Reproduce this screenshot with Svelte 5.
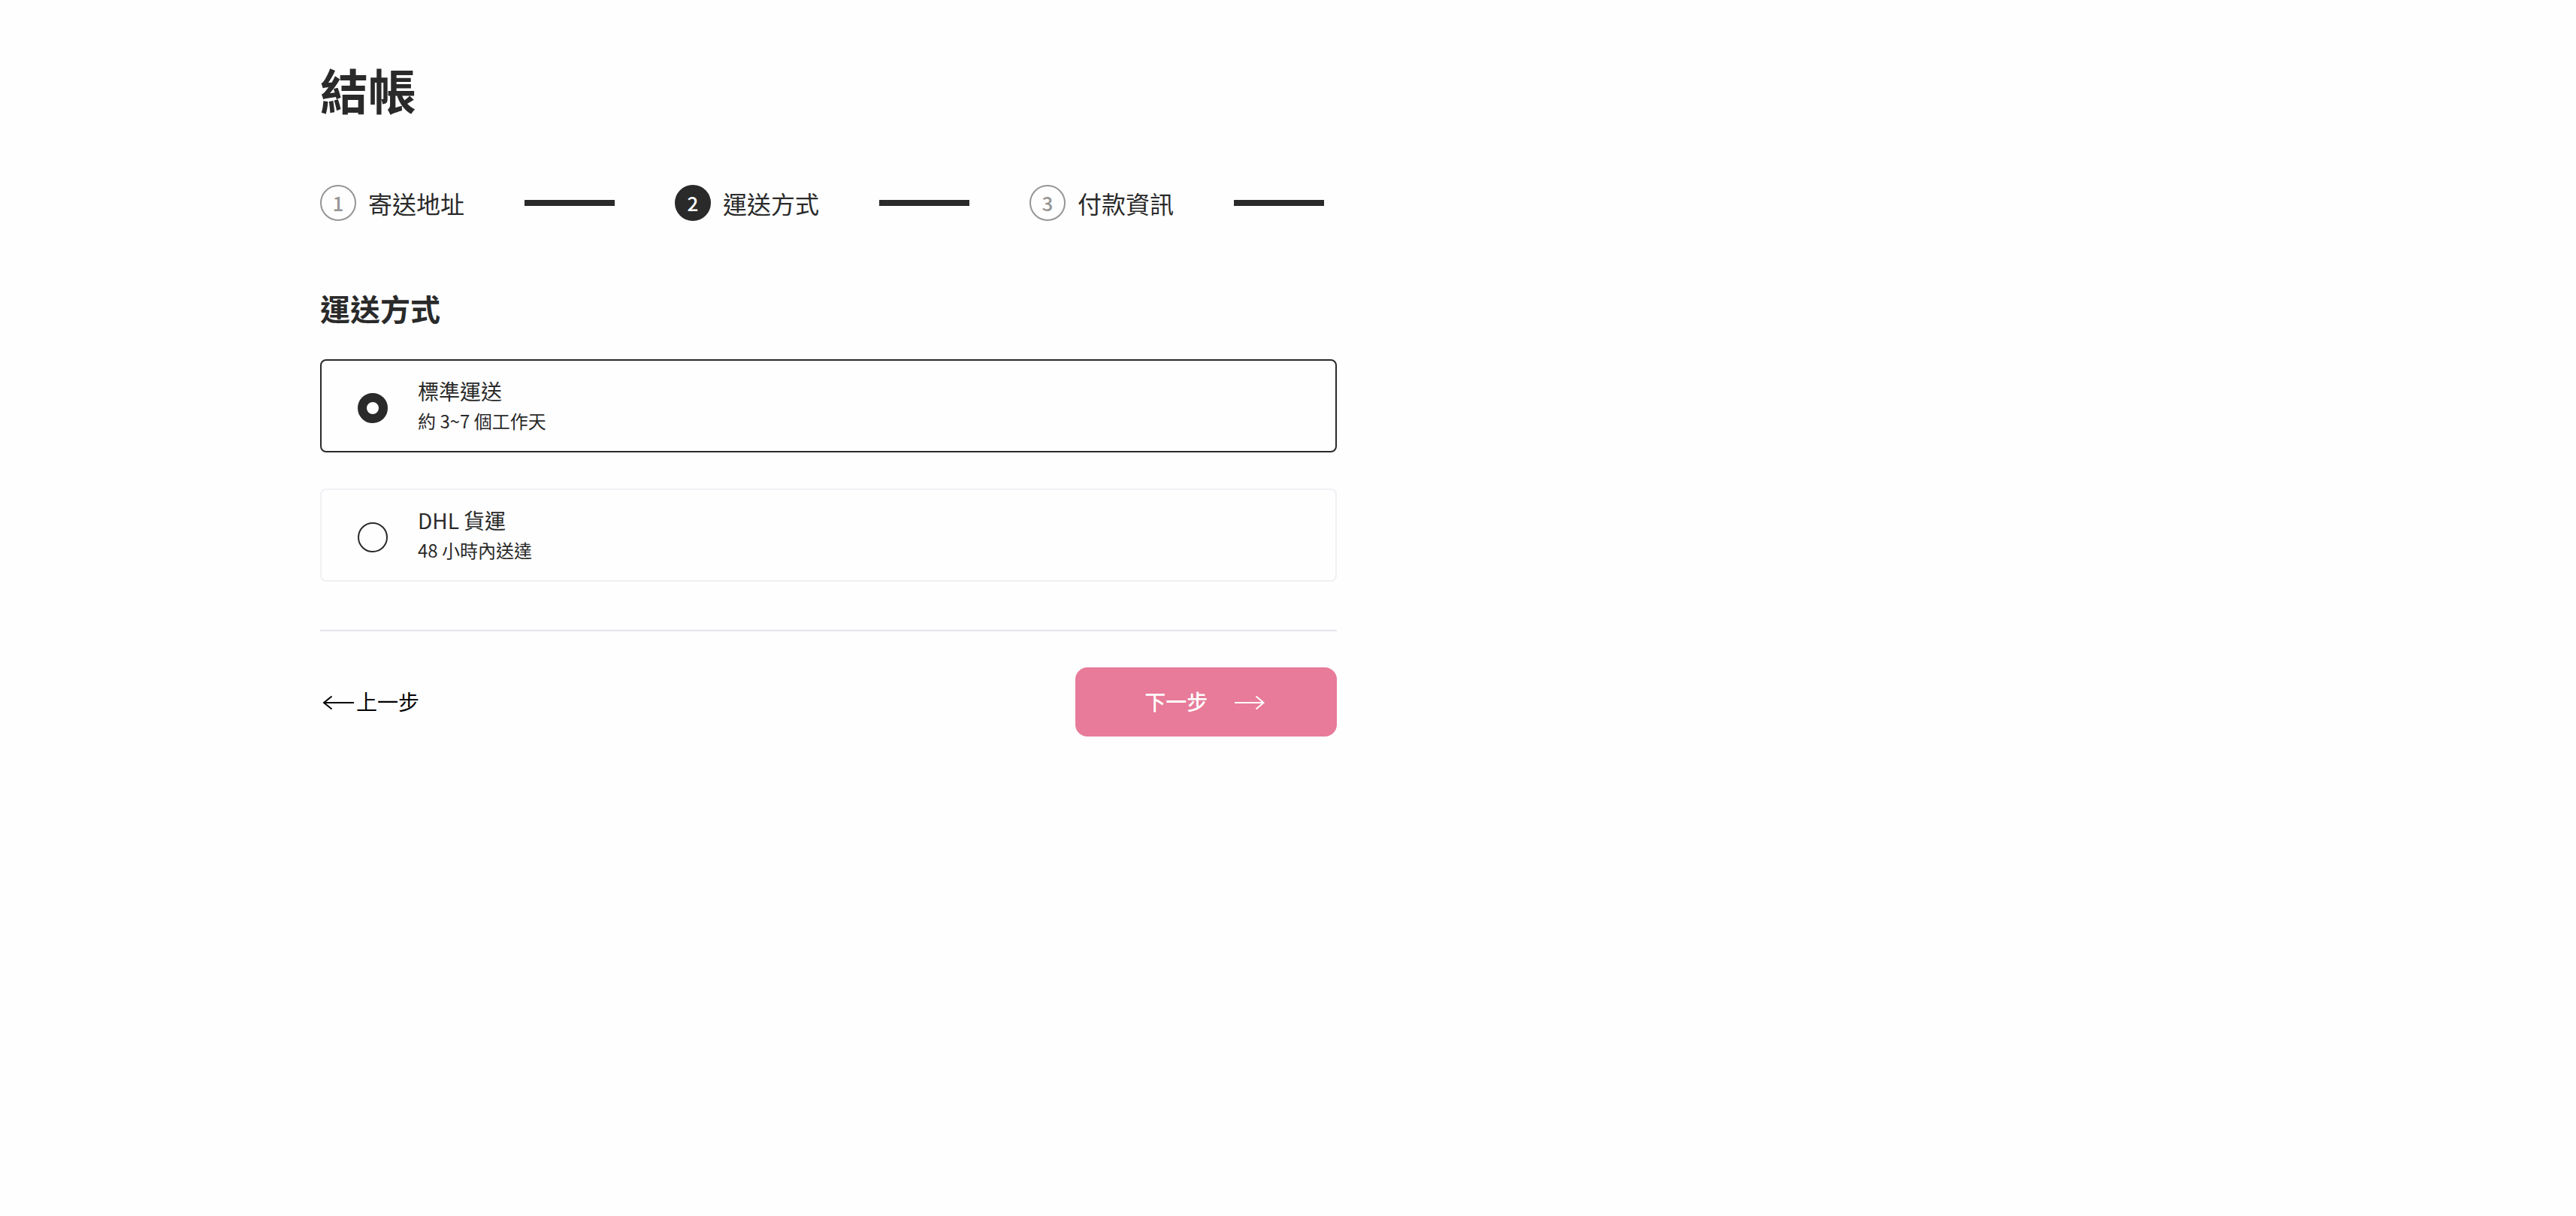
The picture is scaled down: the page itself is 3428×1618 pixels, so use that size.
<script>
  const steps = ['寄送地址', '運送方式', '付款資訊'];
  const current = 1;

  const methods = [
    { id: 'standard', name: '標準運送', note: '約 3~7 個工作天' },
    { id: 'dhl', name: 'DHL 貨運', note: '48 小時內送達' }
  ];
  let selected = $state('standard');
</script>

<main class="page">
  <section class="checkout">
    <h1>結帳</h1>

    <ol class="steps">
      {#each steps as label, i}
        <li class="step" class:active={i === current}>
          <span class="number">{i + 1}</span>
          <span class="label">{label}</span>
          <span class="bar"></span>
        </li>
      {/each}
    </ol>

    <form>
      <h2>運送方式</h2>
      <div class="methods">
        {#each methods as method}
          <label class="method" class:selected={selected === method.id} for={method.id}>
            <input type="radio" id={method.id} name="shipping" value={method.id} bind:group={selected} />
            <span class="text">
              <span class="name">{method.name}</span>
              <span class="note">{method.note}</span>
            </span>
          </label>
        {/each}
      </div>

      <div class="actions">
        <button type="button" class="back">
          <svg viewBox="0 0 48 48" aria-hidden="true">
            <path d="M45 25H5.500M15.500 16.500L5 25L15.500 33.500" />
          </svg>
          <span class="caption">上一步</span>
        </button>
        <button type="button" class="next">
          <span class="caption">下一步</span>
          <svg viewBox="0 0 48 48" aria-hidden="true">
            <path d="M4 25H42M32.500 16.500L42.500 25L32.500 33.500" />
          </svg>
        </button>
      </div>
    </form>
  </section>
</main>

<style>
  :global(body) {
    background: #fefefe;
    color: #2a2a2a;
    font-family: 'Noto Sans CJK TC', 'Noto Sans', sans-serif;
  }

  .page {
    display: grid;
    grid-template-columns: 7fr 5fr;
    column-gap: 256px;
    max-width: 2576px;
    margin: 0 auto;
    padding: 70px 32px;
  }

  h1 {
    margin: 0 0 80px;
    font-size: 64px;
    line-height: 96px;
    font-weight: 700;
  }

  .steps {
    display: flex;
    gap: 80px;
    margin: 0 0 88px;
    padding: 0;
    list-style: none;
  }

  .step {
    display: flex;
    align-items: center;
    white-space: nowrap;
  }

  .number {
    box-sizing: border-box;
    width: 48px;
    height: 48px;
    margin-right: 16px;
    border: 2px solid #959595;
    border-radius: 50%;
    color: #959595;
    font-size: 26px;
    line-height: 44px;
    font-weight: 500;
    text-align: center;
  }

  .active .number {
    border-color: #2a2a2a;
    background: #2a2a2a;
    color: #fff;
  }

  .label {
    font-size: 32px;
    line-height: 48px;
  }

  .bar {
    width: 120px;
    height: 8px;
    margin-left: 80px;
    background: #2a2a2a;
  }

  h2 {
    margin: 0 0 40px;
    font-size: 40px;
    line-height: 56px;
    font-weight: 700;
  }

  .methods {
    display: grid;
    gap: 48px;
    padding-bottom: 64px;
    border-bottom: 2px solid #e5e5eb;
  }

  .method {
    display: flex;
    align-items: center;
    gap: 40px;
    padding: 18px 48px;
    border: 2px solid #f0f0f5;
    border-radius: 8px;
    cursor: pointer;
  }

  .method.selected {
    border-color: #2a2a2a;
  }

  input {
    appearance: none;
    box-sizing: border-box;
    width: 40px;
    height: 40px;
    margin: 6px 0 0;
    border: 2px solid #2a2a2a;
    border-radius: 50%;
    background: transparent;
  }

  input:checked {
    border-width: 12px;
  }

  .text {
    display: grid;
    padding-bottom: 4px;
  }

  .name {
    font-size: 28px;
    line-height: 44px;
  }

  .note {
    font-size: 24px;
    line-height: 36px;
  }

  .actions {
    display: flex;
    justify-content: space-between;
    align-items: center;
    padding-top: 48px;
  }

  button {
    display: flex;
    align-items: center;
    padding: 0;
    border: 0;
    background: none;
    color: #000;
    font-family: inherit;
    font-size: 28px;
    line-height: 44px;
    cursor: pointer;
  }

  .caption {
    padding-bottom: 2px;
  }

  svg {
    width: 48px;
    height: 48px;
    fill: none;
    stroke: currentColor;
    stroke-width: 2;
  }

  .next {
    gap: 32px;
    padding: 22px 92px;
    border-radius: 16px;
    background: #e77b99;
    color: #fff;
    font-weight: 500;
  }
</style>
